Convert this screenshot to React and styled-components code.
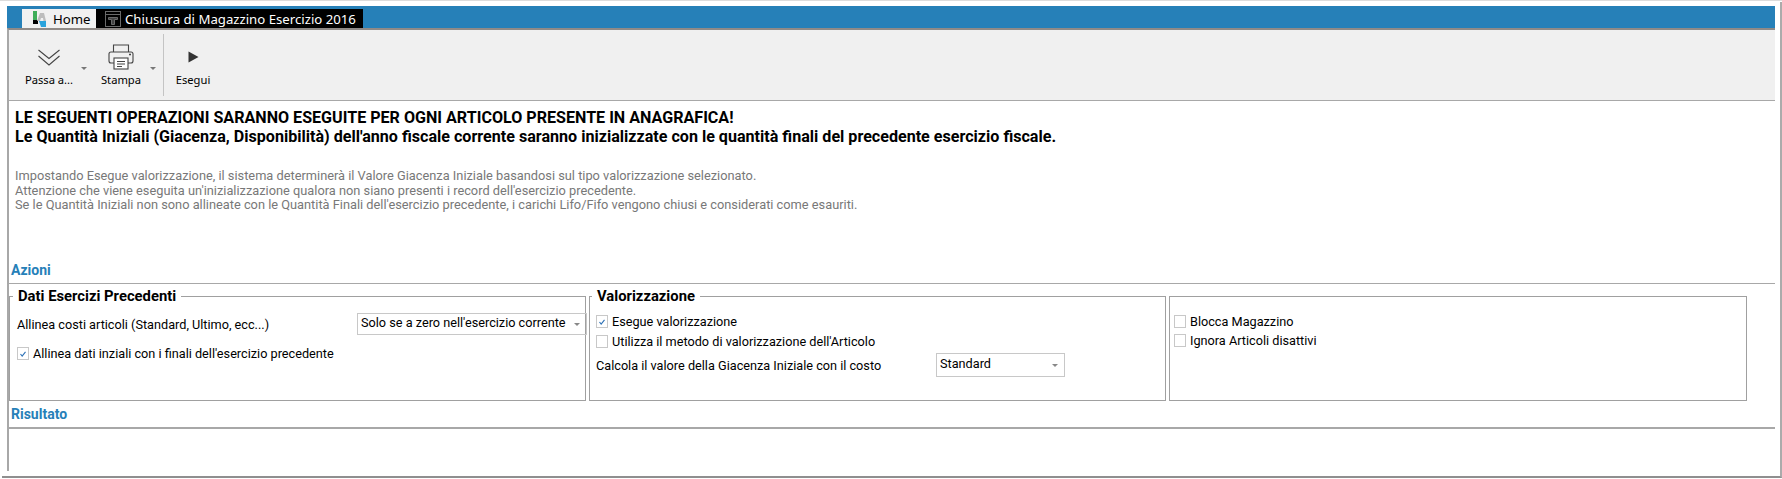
import React from 'react'
import styled, { createGlobalStyle } from 'styled-components'

const GlobalStyle = createGlobalStyle`
  html, body {
    margin: 0;
    padding: 0;
    background: #fff;
    overflow: hidden;
  }
`

const HomeIcon = () => (
  <svg width="13" height="16" viewBox="0 0 13 16" style={{ flex: 'none' }}>
    <rect x="0" y="0" width="4" height="9" fill="#3fae5a" />
    <rect x="0" y="9" width="5" height="4" fill="#000" />
    <path d="M6 10H13V16H8Z" fill="#2aa3dc" />
    <path d="M4 10L7 2H11L13 10H10.5L10 7H8L7 10Z" fill="#bdbdbd" />
  </svg>
)

const MonitorIcon = () => (
  <svg width="16" height="16" viewBox="0 0 16 16" fill="none" stroke="#6a6a6a" strokeWidth="1" style={{ flex: 'none' }}>
    <rect x="0.5" y="0.5" width="15" height="15" />
    <path d="M0.5 3.5H15.5" />
    <path d="M3.5 6.5H12.5V8.5H9.5V13.5H6.5V8.5H3.5Z" fill="#444" />
  </svg>
)

const ChevronsIcon = () => (
  <svg width="22" height="17" viewBox="0 0 22 17" fill="none" stroke="#444" strokeWidth="1.1">
    <path d="M0.5 1L11 9.5L21.5 1" />
    <path d="M0.5 7L11 16L21.5 7" />
  </svg>
)

const PrinterIcon = () => (
  <svg width="26" height="26" viewBox="0 0 26 26" fill="none" stroke="#444" strokeWidth="1.1">
    <path d="M5.5 8V1H20.5V8" />
    <path d="M6 19H3C1.5 19 1 18 1 17V10C1 8.8 1.8 8 3 8H23C24.2 8 25 8.8 25 10V17C25 18 24.5 19 23 19H20" />
    <rect x="6" y="14" width="14" height="11" fill="#fff" />
    <path d="M9 17.5H17M9 20H17M9 22.5H14" />
    <path d="M21 10.5H23M22 9.5V11.5" />
  </svg>
)

const PlayIcon = () => (
  <svg width="11" height="12" viewBox="0 0 11 12">
    <path d="M0.5 0.5L10.5 6L0.5 11.5Z" fill="#333" />
  </svg>
)

const CheckMark = () => (
  <svg width="12" height="12" viewBox="0 0 12 12" fill="none" stroke="#2a6fb5" strokeWidth="1.3">
    <path d="M3 6L5 8.5L9 3.5" />
  </svg>
)

const Page = styled.div`
  box-sizing: border-box;
  width: 1782px;
  height: 479px;
  padding: 1px 0 0 7px;
  border-top: 1px solid #dcdcdc;
  font-family: Roboto, 'Liberation Sans', sans-serif;
  color: #000;
`

const Frame = styled.div`
  box-sizing: border-box;
  height: 476px;
  margin-left: -5px;
  padding: 4px 5px 0 5px;
  border-right: 2px solid #ababab;
  border-bottom: 2px solid #8f8f8f;
  display: flex;
  flex-direction: column;
`

const TitleBar = styled.div`
  display: flex;
  flex: none;
  align-items: flex-end;
  height: 22px;
  padding-left: 15px;
  background: #2680b8;
  font-family: 'Noto Sans', sans-serif;
  font-size: 13.2px;
`

const Tab = styled.div`
  display: flex;
  align-items: center;
  height: 19px;
  gap: ${(props) => (props.$dark ? '4px' : '7px')};
  padding: ${(props) => (props.$dark ? '0 8px 0 9px' : '0 8px 0 11px')};
  width: ${(props) => (props.$dark ? '267px' : '74px')};
  box-sizing: border-box;
  background: ${(props) => (props.$dark ? '#000' : '#f1f1f1')};
  color: ${(props) => (props.$dark ? '#fff' : '#000')};
  white-space: nowrap;
`

const Toolbar = styled.div`
  display: flex;
  flex: none;
  gap: 7px;
  box-sizing: border-box;
  height: 73px;
  padding: 4px 0 4px 10px;
  background: #f0f0f0;
  border-top: 2px solid #8f8a87;
  border-bottom: 1px solid #a8a8a8;
  border-left: 2px solid #a8a8a8;
  font-family: 'Noto Sans', sans-serif;
  font-size: 11.2px;
  line-height: 15px;
`

const ToolButton = styled.div`
  display: flex;
  gap: ${(props) => (props.$caret ? '2px' : '0')};
`

const ToolColumn = styled.div`
  display: flex;
  flex-direction: column;
  align-items: center;
  padding-top: 8px;
  width: ${(props) => props.$width}px;
`

const ToolIcon = styled.div`
  display: flex;
  align-items: center;
  justify-content: center;
  height: 30px;
`

const Caret = styled.span`
  align-self: flex-start;
  margin-top: 33px;
  width: 0;
  height: 0;
  border-left: 3px solid transparent;
  border-right: 3px solid transparent;
  border-top: 3px solid #777;
`

const ToolSeparator = styled.div`
  width: 1px;
  background: #c4c4c4;
`

const Content = styled.div`
  flex: 1;
  display: flex;
  flex-direction: column;
  border-left: 2px solid #a8a8a8;
  margin-bottom: 5px;
`

const Notice = styled.div`
  padding: 7px 0 0 6px;
  height: 155px;
  box-sizing: border-box;
`

const Heading = styled.div`
  font-size: 16.1px;
  font-weight: 700;
  line-height: 19px;
`

const Hint = styled.div`
  margin-top: 23px;
  font-size: 12.8px;
  line-height: 14.5px;
  color: #787878;
`

const SectionTitle = styled.div`
  display: flex;
  flex: none;
  align-items: center;
  height: 28px;
  padding-left: 2px;
  font-size: 14px;
  font-weight: 700;
  color: #2680b8;
  border-bottom: ${(props) => (props.$thick ? '2px' : '1px')} solid #a8a8a8;
  box-sizing: border-box;
`

const Groups = styled.div`
  display: grid;
  flex: none;
  grid-template-columns: 577px 577px 578px;
  gap: 3px;
  margin-top: 5px;
  height: 112px;
`

const Group = styled.fieldset`
  box-sizing: border-box;
  margin: ${(props) => (props.$bare ? '7px 0 0' : '0')};
  min-width: 0;
  height: ${(props) => (props.$bare ? '105px' : '112px')};
  padding: 0 ${(props) => props.$pad}px;
  border: 1px solid #a0a0a0;
  display: flex;
  flex-direction: column;
  align-items: flex-start;
  font-size: 12.7px;
`

const GroupTitle = styled.legend`
  padding: 0 5px;
  margin-left: -4px;
  font-size: 14.8px;
  font-weight: 700;
  line-height: 15px;
`

const FieldRow = styled.div`
  display: flex;
  align-items: center;
  margin-top: ${(props) => props.$top || 0}px;
  width: 100%;
`

const FieldLabel = styled.span`
  width: 340px;
  flex: none;
`

const Select = styled.div`
  display: flex;
  flex: none;
  align-items: center;
  justify-content: space-between;
  box-sizing: border-box;
  width: ${(props) => props.$width}px;
  height: ${(props) => props.$height}px;
  padding: 0 6px 3px 3px;
  border: 1px solid #c8c8c8;
  &::after {
    content: '';
    border-left: 3px solid transparent;
    border-right: 3px solid transparent;
    border-top: 3px solid #888;
    margin-top: 3px;
  }
`

const CheckRow = styled.label`
  display: flex;
  align-items: center;
  gap: 4px;
  height: 13px;
  margin-top: ${(props) => props.$top || 0}px;
`

const CheckBox = styled.span`
  box-sizing: border-box;
  display: flex;
  width: 12px;
  height: 13px;
  border: 1px solid #c8c8c8;
  align-items: center;
  justify-content: center;
`

const Check = ({ checked, top, children }) => (
  <CheckRow $top={top}>
    <CheckBox>{checked && <CheckMark />}</CheckBox>
    {children}
  </CheckRow>
)

export default function App() {
  return (
    <Page>
      <GlobalStyle />
      <Frame>
        <TitleBar>
          <Tab>
            <HomeIcon />
            Home
          </Tab>
          <Tab $dark>
            <MonitorIcon />
            Chiusura di Magazzino Esercizio 2016
          </Tab>
        </TitleBar>
        <Toolbar>
          <ToolButton $caret>
            <ToolColumn $width={60}>
              <ToolIcon><ChevronsIcon /></ToolIcon>
              Passa a...
            </ToolColumn>
            <Caret />
          </ToolButton>
          <ToolButton $caret>
            <ToolColumn $width={54}>
              <ToolIcon><PrinterIcon /></ToolIcon>
              Stampa
            </ToolColumn>
            <Caret />
          </ToolButton>
          <ToolSeparator />
          <ToolButton>
            <ToolColumn $width={44}>
              <ToolIcon><PlayIcon /></ToolIcon>
              Esegui
            </ToolColumn>
          </ToolButton>
        </Toolbar>
        <Content>
          <Notice>
            <Heading>LE SEGUENTI OPERAZIONI SARANNO ESEGUITE PER OGNI ARTICOLO PRESENTE IN ANAGRAFICA!</Heading>
            <Heading>Le Quantità Iniziali (Giacenza, Disponibilità) dell'anno fiscale corrente saranno inizializzate con le quantità finali del precedente esercizio fiscale.</Heading>
            <Hint>
              Impostando Esegue valorizzazione, il sistema determinerà il Valore Giacenza Iniziale basandosi sul tipo valorizzazione selezionato.<br />
              Attenzione che viene eseguita un'inizializzazione qualora non siano presenti i record dell'esercizio precedente.<br />
              Se le Quantità Iniziali non sono allineate con le Quantità Finali dell'esercizio precedente, i carichi Lifo/Fifo vengono chiusi e considerati come esauriti.
            </Hint>
          </Notice>
          <SectionTitle>Azioni</SectionTitle>
          <Groups>
            <Group $pad={7}>
              <GroupTitle>Dati Esercizi Precedenti</GroupTitle>
              <FieldRow $top={9}>
                <FieldLabel>Allinea costi articoli (Standard, Ultimo, ecc...)</FieldLabel>
                <Select $width={230} $height={22}>Solo se a zero nell'esercizio corrente</Select>
              </FieldRow>
              <Check checked top={12}>Allinea dati inziali con i finali dell'esercizio precedente</Check>
            </Group>
            <Group $pad={6}>
              <GroupTitle>Valorizzazione</GroupTitle>
              <Check checked top={11}>Esegue valorizzazione</Check>
              <Check top={7}>Utilizza il metodo di valorizzazione dell'Articolo</Check>
              <FieldRow $top={5}>
                <FieldLabel>Calcola il valore della Giacenza Iniziale con il costo</FieldLabel>
                <Select $width={129} $height={24}>Standard</Select>
              </FieldRow>
            </Group>
            <Group $bare $pad={4}>
              <Check top={18}>Blocca Magazzino</Check>
              <Check top={6}>Ignora Articoli disattivi</Check>
            </Group>
          </Groups>
          <SectionTitle $thick>Risultato</SectionTitle>
        </Content>
      </Frame>
    </Page>
  )
}
